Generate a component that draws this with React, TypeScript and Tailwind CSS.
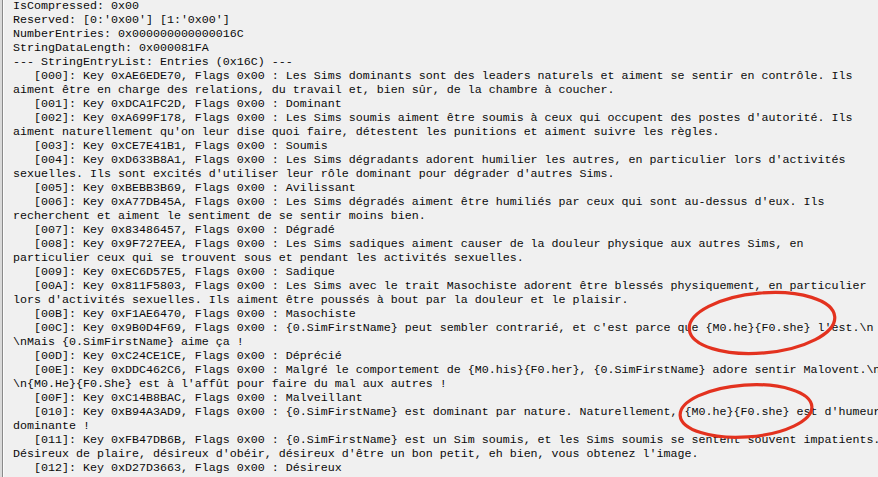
import { FunctionComponent } from "react";

const lines: string[] = [
  "IsCompressed: 0x00",
  "Reserved: [0:'0x00'] [1:'0x00']",
  "NumberEntries: 0x000000000000016C",
  "StringDataLength: 0x000081FA",
  "--- StringEntryList: Entries (0x16C) ---",
  "   [000]: Key 0xAE6EDE70, Flags 0x00 : Les Sims dominants sont des leaders naturels et aiment se sentir en contrôle. Ils",
  "aiment être en charge des relations, du travail et, bien sûr, de la chambre à coucher.",
  "   [001]: Key 0xDCA1FC2D, Flags 0x00 : Dominant",
  "   [002]: Key 0xA699F178, Flags 0x00 : Les Sims soumis aiment être soumis à ceux qui occupent des postes d'autorité. Ils",
  "aiment naturellement qu'on leur dise quoi faire, détestent les punitions et aiment suivre les règles.",
  "   [003]: Key 0xCE7E41B1, Flags 0x00 : Soumis",
  "   [004]: Key 0xD633B8A1, Flags 0x00 : Les Sims dégradants adorent humilier les autres, en particulier lors d'activités",
  "sexuelles. Ils sont excités d'utiliser leur rôle dominant pour dégrader d'autres Sims.",
  "   [005]: Key 0xBEBB3B69, Flags 0x00 : Avilissant",
  "   [006]: Key 0xA77DB45A, Flags 0x00 : Les Sims dégradés aiment être humiliés par ceux qui sont au-dessus d'eux. Ils",
  "recherchent et aiment le sentiment de se sentir moins bien.",
  "   [007]: Key 0x83486457, Flags 0x00 : Dégradé",
  "   [008]: Key 0x9F727EEA, Flags 0x00 : Les Sims sadiques aiment causer de la douleur physique aux autres Sims, en",
  "particulier ceux qui se trouvent sous et pendant les activités sexuelles.",
  "   [009]: Key 0xEC6D57E5, Flags 0x00 : Sadique",
  "   [00A]: Key 0x811F5803, Flags 0x00 : Les Sims avec le trait Masochiste adorent être blessés physiquement, en particulier",
  "lors d'activités sexuelles. Ils aiment être poussés à bout par la douleur et le plaisir.",
  "   [00B]: Key 0xF1AE6470, Flags 0x00 : Masochiste",
  "   [00C]: Key 0x9B0D4F69, Flags 0x00 : {0.SimFirstName} peut sembler contrarié, et c'est parce que {M0.he}{F0.she} l'est.\\n",
  "\\nMais {0.SimFirstName} aime ça !",
  "   [00D]: Key 0xC24CE1CE, Flags 0x00 : Déprécié",
  "   [00E]: Key 0xDDC462C6, Flags 0x00 : Malgré le comportement de {M0.his}{F0.her}, {0.SimFirstName} adore sentir Malovent.\\n",
  "\\n{M0.He}{F0.She} est à l'affût pour faire du mal aux autres !",
  "   [00F]: Key 0xC14B8BAC, Flags 0x00 : Malveillant",
  "   [010]: Key 0xB94A3AD9, Flags 0x00 : {0.SimFirstName} est dominant par nature. Naturellement, {M0.he}{F0.she} est d'humeur",
  "dominante !",
  "   [011]: Key 0xFB47DB6B, Flags 0x00 : {0.SimFirstName} est un Sim soumis, et les Sims soumis se sentent souvent impatients.",
  "Désireux de plaire, désireux d'obéir, désireux d'être un bon petit, eh bien, vous obtenez l'image.",
  "   [012]: Key 0xD27D3663, Flags 0x00 : Désireux",
];

// red marker circles drawn over the screenshot
const Marks: FunctionComponent = () => {
  return (
    <svg
      className="absolute inset-0 pointer-events-none"
      width={878}
      height={477}
      viewBox="0 0 878 477"
    >
      <ellipse
        cx={762}
        cy={323}
        rx={73}
        ry={30}
        transform="rotate(-5 762 323)"
        fill="none"
        stroke="#e3321f"
        strokeWidth={3.2}
      />
      <ellipse
        cx={746}
        cy={411}
        rx={66}
        ry={26}
        transform="rotate(-4 746 411)"
        fill="none"
        stroke="#e3321f"
        strokeWidth={3.2}
      />
    </svg>
  );
};

const App: FunctionComponent = () => {
  return (
    <div className="relative flex w-[878px] h-[477px] overflow-hidden bg-[#f0f0f0]">
      <div className="w-[2px] h-full bg-[#dadada]" />
      <div className="w-px h-full bg-[#8a8a8a]" />
      <div className="w-px h-full bg-[#fcfcfc]" />
      <pre
        className="flex-1 -mt-px pl-[9px] text-[11.66px] leading-[14px] text-[#0a0a0a] whitespace-pre overflow-hidden"
        style={{ fontFamily: '"Liberation Mono", "Courier New", monospace' }}
      >
        {lines.map((line, i) => (
          <div key={i} className="h-[14px]">
            {line}
          </div>
        ))}
      </pre>
      <Marks />
    </div>
  );
};

export default App;
